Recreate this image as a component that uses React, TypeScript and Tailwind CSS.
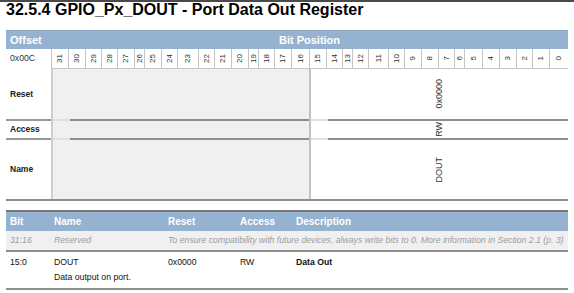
const bitCols: { n: number; w: string }[] = [
  { n: 31, w: "w-[17px]" },
  { n: 30, w: "w-[17px]" },
  { n: 29, w: "w-[16px]" },
  { n: 28, w: "w-[16px]" },
  { n: 27, w: "w-[17px]" },
  { n: 26, w: "w-[10px]" },
  { n: 25, w: "w-[17px]" },
  { n: 24, w: "w-[16px]" },
  { n: 23, w: "w-[21px]" },
  { n: 22, w: "w-[16px]" },
  { n: 21, w: "w-[17px]" },
  { n: 20, w: "w-[17px]" },
  { n: 19, w: "w-[10px]" },
  { n: 18, w: "w-[16px]" },
  { n: 17, w: "w-[17px]" },
  { n: 16, w: "w-[18px]" },
  { n: 15, w: "w-[17px]" },
  { n: 14, w: "w-[16px]" },
  { n: 13, w: "w-[10px]" },
  { n: 12, w: "w-[16px]" },
  { n: 11, w: "w-[20px]" },
  { n: 10, w: "w-[16px]" },
  { n: 9, w: "w-[17px]" },
  { n: 8, w: "w-[17px]" },
  { n: 7, w: "w-[16px]" },
  { n: 6, w: "w-[10px]" },
  { n: 5, w: "w-[18px]" },
  { n: 4, w: "w-[17px]" },
  { n: 3, w: "w-[17px]" },
  { n: 2, w: "w-[16px]" },
  { n: 1, w: "w-[17px]" },
  { n: 0, w: "w-[19px]" },
];

function FieldLine() {
  return (
    <div className="flex h-[2px]">
      <div className="w-[17px] bg-[#e0e0e0]" />
      <div className="flex-1 bg-[#8e8e8e]" />
    </div>
  );
}

function RegRow({
  label,
  value,
  height,
  line = true,
}: {
  label: string;
  value: string;
  height: string;
  line?: boolean;
}) {
  return (
    <div className={`flex ${height}`}>
      <div className="flex w-[45px] flex-col">
        <div className="flex flex-1 items-center pl-1 text-[8.5px] font-bold text-[#222]">
          {label}
        </div>
        {line && <div className="h-[2px] bg-[#999]" />}
      </div>
      <div className="flex w-[258px] flex-col border-l-2 border-[#cfcfcf] bg-[#f0f0f0]">
        <div className="flex-1" />
        {line && <FieldLine />}
      </div>
      <div className="flex flex-1 flex-col border-l-2 border-[#c2c2c2] bg-white">
        <div className="flex flex-1 items-center justify-center">
          <span className="rotate-180 text-[9px] text-[#333] [writing-mode:vertical-rl]">
            {value}
          </span>
        </div>
        {line && <FieldLine />}
      </div>
    </div>
  );
}

export default function App() {
  return (
    <div className="h-[293px] w-[574px] overflow-hidden bg-white font-['Liberation_Sans',Arial,sans-serif]">
      <div className="h-[2px] bg-[#4a4a4a]" />
      <h1 className="pl-[6px] text-[16px] leading-[16px] font-bold text-black">
        32.5.4 GPIO_Px_DOUT - Port Data Out Register
      </h1>

      <div className="mx-[6px] mt-[12px] w-[562px]">
        <div className="flex h-[19px] items-center border-t border-[#8aa6c0] bg-[#95b3d0] text-[11px] font-bold text-white">
          <div className="w-[45px] pl-1">Offset</div>
          <div className="flex-1 text-center">Bit Position</div>
        </div>
        <div className="flex h-[20px]">
          <div className="flex w-[45px] items-center pl-1 text-[8.7px] text-[#333]">0x00C</div>
          {bitCols.map((c) => (
            <div
              key={c.n}
              className={`${c.w} flex items-center justify-center border-b border-l border-[#c4c4c4]`}
            >
              <span className="rotate-180 text-[8px] leading-none text-[#333] [writing-mode:vertical-rl]">
                {c.n}
              </span>
            </div>
          ))}
        </div>
        <RegRow label="Reset" value="0x0000" height="h-[52px]" />
        <RegRow label="Access" value="RW" height="h-[19px]" />
        <RegRow label="Name" value="DOUT" height="h-[59px]" line={false} />
        <div className="h-[2px] bg-[#8f8f8f]" />
      </div>

      <div className="mx-[6px] mt-[9px] w-[562px] text-[8.7px]">
        <div className="h-[2px] bg-[#777]" />
        <div className="flex h-[19px] items-center bg-[#95b3d0] text-[10px] font-bold text-white">
          <div className="w-[44px] pl-1">Bit</div>
          <div className="w-[114px] pl-1">Name</div>
          <div className="w-[72px] pl-1">Reset</div>
          <div className="w-[56px] pl-1">Access</div>
          <div className="flex-1 pl-1">Description</div>
        </div>
        <div className="flex h-[19px] items-center bg-[#f0f0f0] text-[#9c9c9c] italic">
          <div className="w-[44px] pl-1">31:16</div>
          <div className="w-[114px] pl-1">Reserved</div>
          <div className="flex-1 pl-1 whitespace-nowrap">
            To ensure compatibility with future devices, always write bits to 0. More information in Section 2.1 (p. 3)
          </div>
        </div>
        <div className="h-[2px] bg-[#8f8f8f]" />
        <div className="flex pt-[4px] pb-[3px] text-[#111]">
          <div className="w-[44px] pl-1">15:0</div>
          <div className="w-[114px] pl-1">
            <div className="h-[15px]">DOUT</div>
            <div className="h-[14px]">Data output on port.</div>
          </div>
          <div className="w-[72px] pl-1">0x0000</div>
          <div className="w-[56px] pl-1">RW</div>
          <div className="flex-1 pl-1 font-bold">Data Out</div>
        </div>
        <div className="h-[2px] bg-[#8f8f8f]" />
      </div>
    </div>
  );
}
